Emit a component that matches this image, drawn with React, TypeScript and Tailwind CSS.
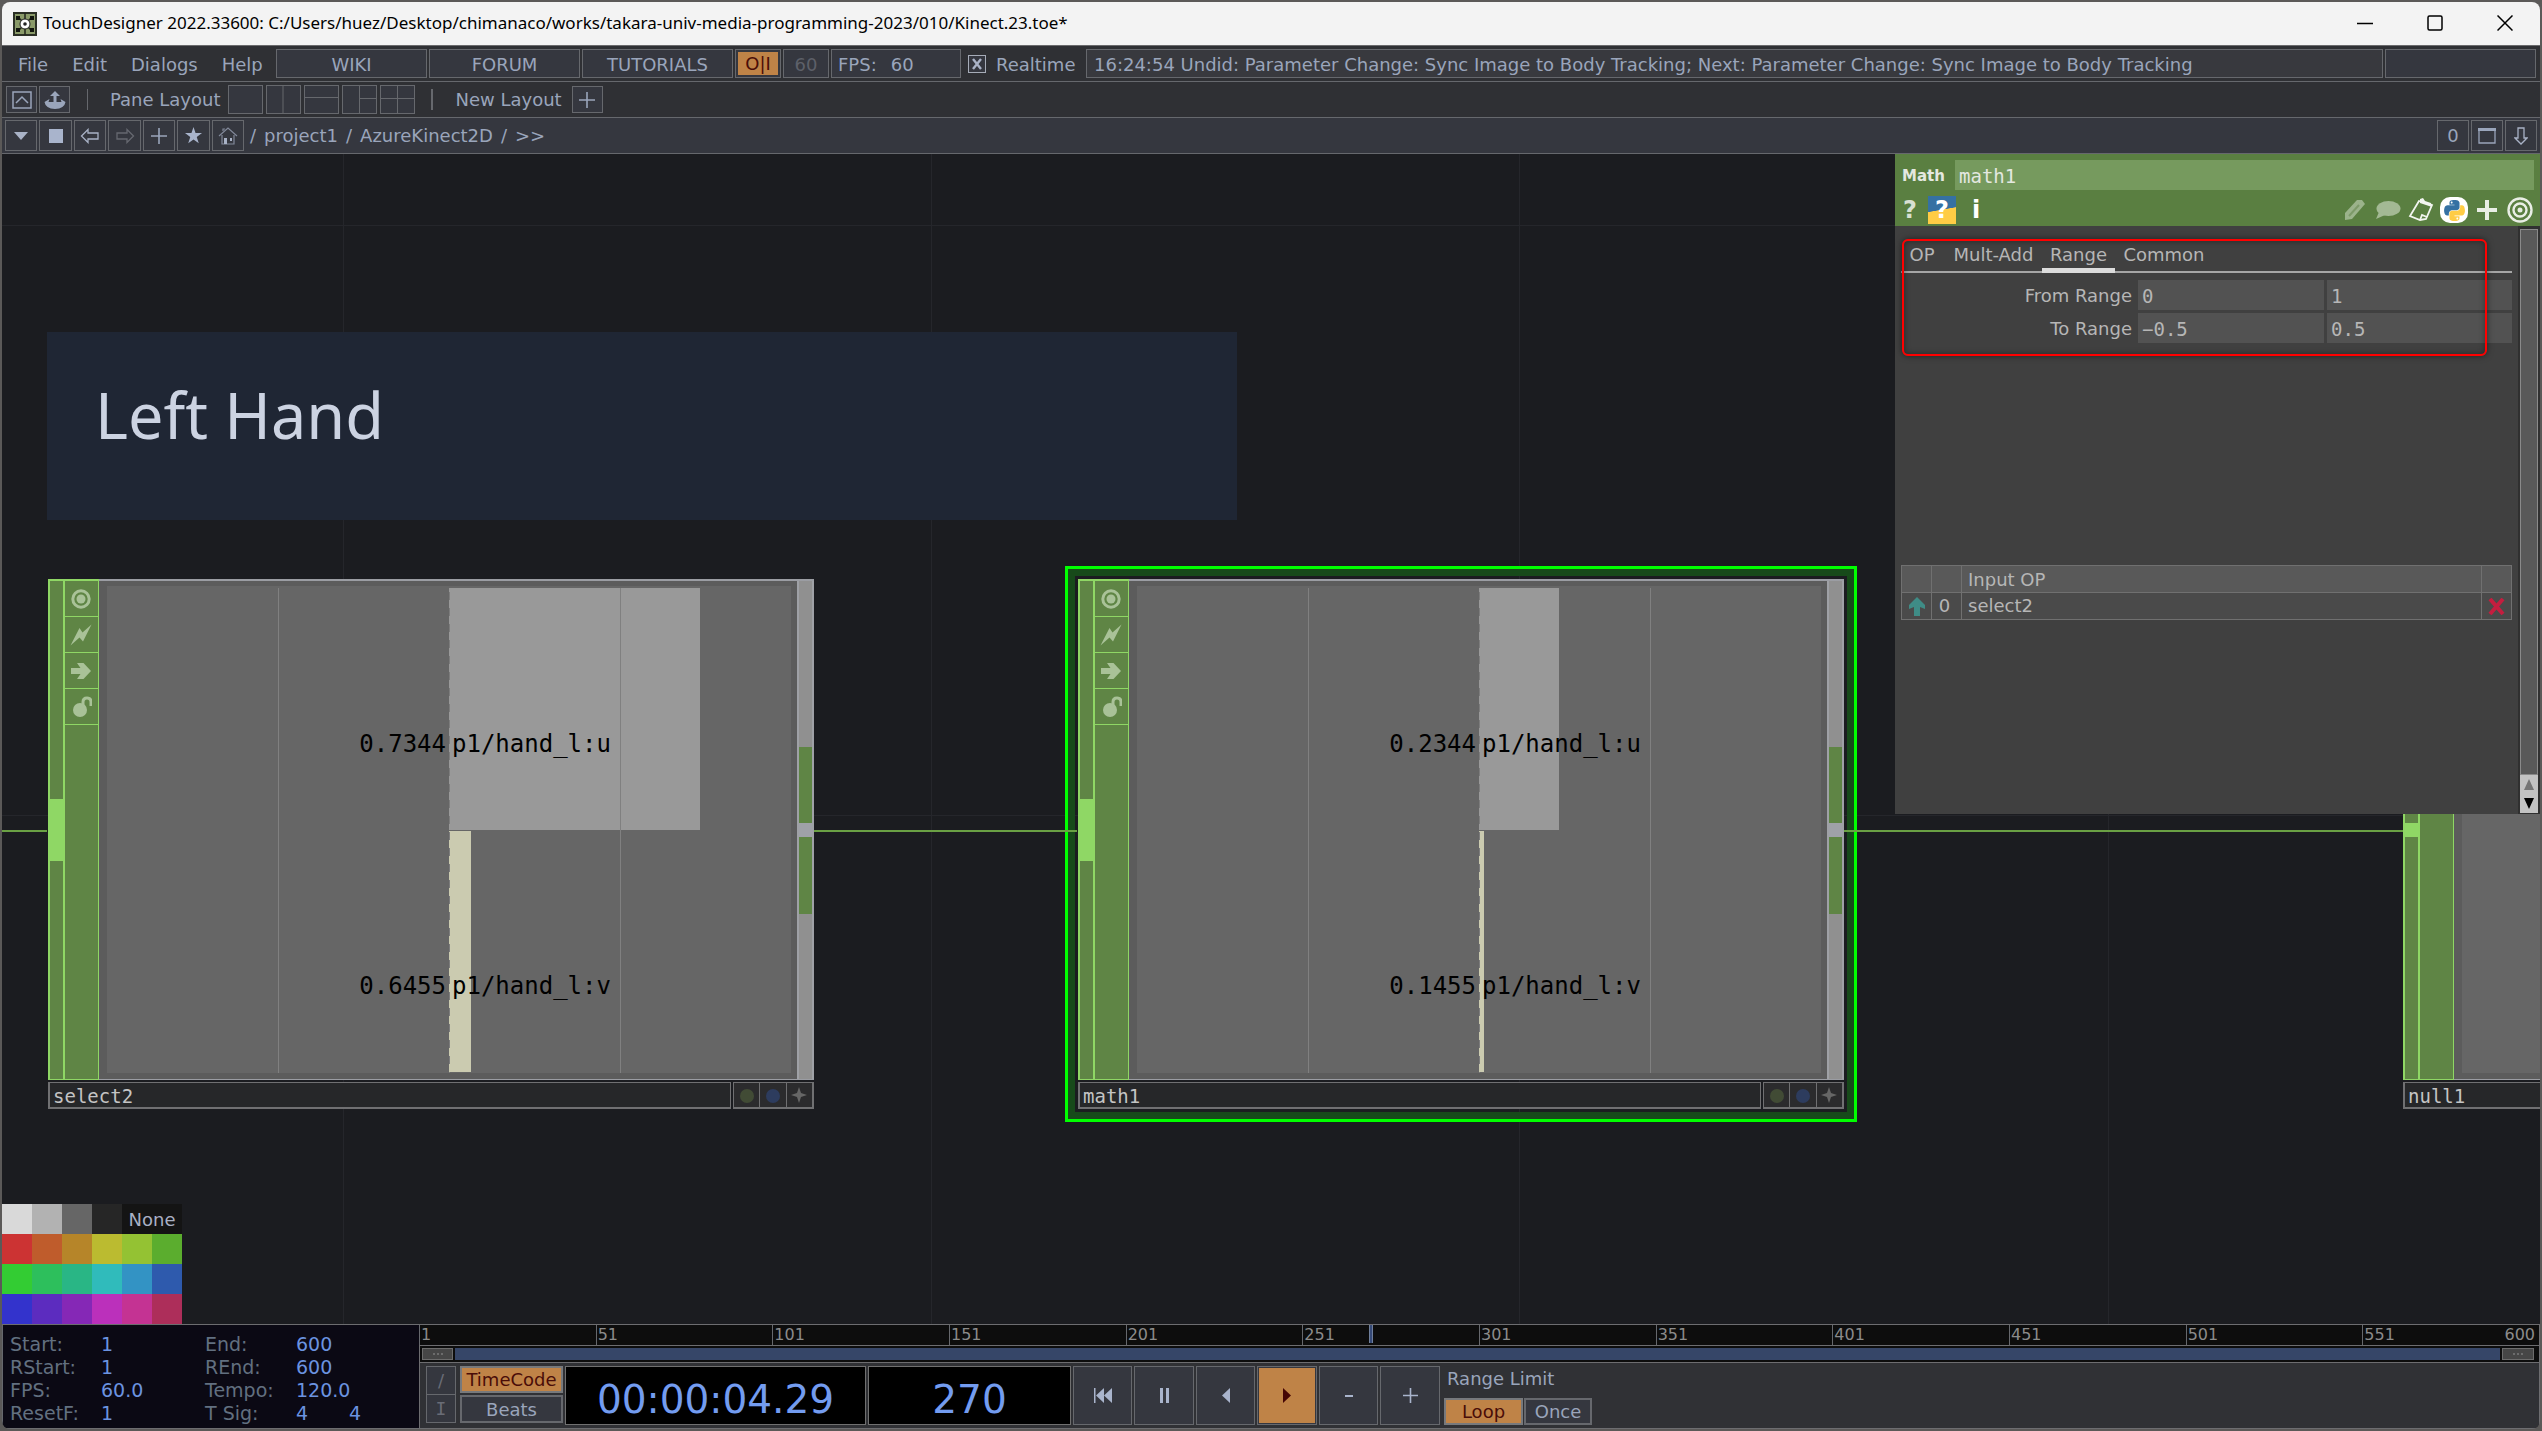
import type { ReactNode } from "react";

const range = (n: number) => Array.from({ length: n }, (_, i) => i);

const PALETTE = [
  "bg-[#cc3333]", "bg-[#bf5c2c]", "bg-[#b68529]", "bg-[#bbbb30]", "bg-[#94c233]", "bg-[#5bad2e]",
  "bg-[#33cc33]", "bg-[#2dbf5c]", "bg-[#29b685]", "bg-[#30bbbb]", "bg-[#3393c4]", "bg-[#2e5aad]",
  "bg-[#3333cc]", "bg-[#5c2cbf]", "bg-[#8528b6]", "bg-[#bb30bb]", "bg-[#c43393]", "bg-[#ad2e5a]",
];

/* ---------- icons ---------- */

const AppIcon = () => (
  <svg width="24" height="24" viewBox="0 0 24 24">
    <rect x="1" y="1" width="22" height="22" fill="#8a9a68" stroke="#2b2f24" strokeWidth="2" />
    <path d="M12 1v22M5 5l14 14M19 5L5 19" stroke="#20241a" strokeWidth="1.5" />
    <path d="M3 4h4v4H3zM17 4h4v4h-4zM3 16h4v4H3zM17 16h4v4h-4z" fill="#11140d" />
    <circle cx="12" cy="12" r="5" fill="#fff" stroke="#222" />
    <circle cx="12" cy="12" r="1.8" fill="#222" />
  </svg>
);

const PythonIcon = ({ size }: { size: number }) => (
  <svg width={size} height={size} viewBox="0 0 111 112">
    <path
      fill="#3571a3"
      d="M54.919 0c-4.584.022-8.961.413-12.813 1.095C30.76 3.099 28.7 7.295 28.7 15.032v10.219h26.813v3.406H18.638c-7.793 0-14.616 4.684-16.75 13.594-2.462 10.213-2.571 16.586 0 27.25 1.905 7.938 6.457 13.594 14.25 13.594h9.219v-12.25c0-8.85 7.657-16.656 16.75-16.656h26.781c7.455 0 13.406-6.138 13.406-13.625v-25.53c0-7.266-6.13-12.725-13.406-13.938C64.282.328 59.502-.02 54.918 0zm-14.5 8.22c2.77 0 5.031 2.298 5.031 5.125 0 2.816-2.262 5.093-5.031 5.093-2.78 0-5.031-2.277-5.031-5.093 0-2.827 2.251-5.125 5.031-5.125z"
    />
    <path
      fill="#ffcc45"
      d="M85.638 28.657v11.906c0 9.231-7.826 17-16.75 17H42.106c-7.336 0-13.406 6.279-13.406 13.625V96.72c0 7.266 6.319 11.54 13.406 13.625 8.488 2.495 16.627 2.946 26.782 0 6.75-1.955 13.406-5.888 13.406-13.625V86.501H55.513v-3.405H95.7c7.793 0 10.696-5.436 13.406-13.594 2.8-8.399 2.68-16.476 0-27.25-1.925-7.758-5.604-13.594-13.406-13.594zM70.575 93.313c2.78 0 5.031 2.278 5.031 5.094 0 2.827-2.251 5.125-5.031 5.125-2.77 0-5.031-2.298-5.031-5.125 0-2.816 2.261-5.094 5.031-5.094z"
    />
  </svg>
);

const PlusIcon = () => (
  <svg width="16" height="16" viewBox="0 0 16 16">
    <path d="M8 0v16M0 8h16" stroke="currentColor" strokeWidth="1.6" />
  </svg>
);

const FLAG_ICONS = [
  // viewer
  <svg key="viewer" width="22" height="22" viewBox="0 0 22 22">
    <circle cx="11" cy="11" r="8.2" fill="none" stroke="#a9c298" strokeWidth="3" />
    <circle cx="11" cy="11" r="4.5" fill="#a9c298" />
  </svg>,
  // cook
  <svg key="cook" width="22" height="22" viewBox="0 0 22 22">
    <path d="M.5 21.5L9.500 4l3 4.500L21.500.5l-8.500 17-3.500-4z" fill="#a9c298" />
  </svg>,
  // bypass
  <svg key="bypass" width="22" height="22" viewBox="0 0 22 22">
    <path d="M1 8h9.500L7 3h6.500L21 11l-7.500 8H7l3.500-5H1z" fill="#a9c298" />
  </svg>,
  // lock
  <svg key="lock" width="22" height="22" viewBox="0 0 22 22">
    <circle cx="10" cy="14" r="7" fill="#a9c298" />
    <path d="M13 9V6q0-4 4-4t4 4v4" fill="none" stroke="#a9c298" strokeWidth="3" />
  </svg>,
];

/* ---------- top bars ---------- */

const BoxButton = ({ className, label, children }: { className: string; label?: string; children?: ReactNode }) => (
  <button aria-label={label} className={`flex shrink-0 items-center justify-center border border-[#66686d] bg-[#35373f] ${className}`}>
    {children}
  </button>
);

const TitleBar = () => (
  <header className="flex h-11 shrink-0 items-center border-b border-[#6a6a6c] bg-[#f3f3f3] pl-[11px] text-black">
    <AppIcon />
    <h1 className="ml-1.5 flex-1 pb-px font-['Noto_Sans',sans-serif] text-[17px] whitespace-nowrap">
      TouchDesigner 2022.33600: C:/Users/huez/Desktop/chimanaco/works/takara-univ-media-programming-2023/010/Kinect.23.toe*
    </h1>
    <div className="flex items-center gap-[54px] pr-[27px] pb-0.5">
      <button aria-label="Minimize">
        <svg width="16" height="16" viewBox="0 0 16 16"><path d="M0 8.500h16" stroke="#000" strokeWidth="1.300" /></svg>
      </button>
      <button aria-label="Maximize">
        <svg width="16" height="16" viewBox="0 0 16 16"><rect x="1" y="1" width="14" height="14" rx="1.500" fill="none" stroke="#000" strokeWidth="1.500" /></svg>
      </button>
      <button aria-label="Close">
        <svg width="16" height="16" viewBox="0 0 16 16"><path d="M.5.5l15 15M15.500.5l-15 15" stroke="#000" strokeWidth="1.500" /></svg>
      </button>
    </div>
  </header>
);

const MenuBar = () => (
  <div className="flex h-9 shrink-0 items-center border-b border-[#66686d] bg-[#2f3034]">
    <nav className="flex w-[274px] shrink-0 gap-6 pt-0.5 pl-4">
      <button>File</button>
      <button>Edit</button>
      <button>Dialogs</button>
      <button>Help</button>
    </nav>
    <div className="flex items-center gap-0.5">
      <BoxButton className="h-[29px] w-[151px] pt-0.5">WIKI</BoxButton>
      <BoxButton className="h-[29px] w-[151px] pt-0.5">FORUM</BoxButton>
      <BoxButton className="h-[29px] w-[151px] pt-0.5">TUTORIALS</BoxButton>
      <BoxButton className="h-[29px] w-[46px] p-0.5">
        <span className="flex h-full w-full items-center justify-center bg-[#bf8347] text-[#4a0d08]">O|I</span>
      </BoxButton>
      <BoxButton className="h-[29px] w-[46px] pt-0.5 text-[#5d6069]">60</BoxButton>
      <div className="flex h-[29px] w-[130px] shrink-0 items-center gap-3.5 border border-[#66686d] bg-[#35373f] pt-0.5 pl-1.5">
        <span>FPS:</span>
        <span>60</span>
      </div>
    </div>
    <div className="flex w-[125px] shrink-0 items-center gap-2.5 pl-[7px]">
      <span className="grid">
        <input id="realtime" type="checkbox" defaultChecked className="col-start-1 row-start-1 size-[18px] appearance-none border border-[#a6acb8] bg-[#35373f]" />
        <svg width="18" height="18" viewBox="0 0 18 18" className="pointer-events-none col-start-1 row-start-1">
          <path d="M5 4l8 10M13 4L5 14" stroke="#a9b2c6" strokeWidth="2.400" />
        </svg>
      </span>
      <label htmlFor="realtime" className="pt-[3px]">Realtime</label>
    </div>
    <div className="mr-0.5 flex h-[29px] min-w-0 flex-1 items-center border border-[#66686d] bg-[#38393e] pt-0.5 pl-[7px] whitespace-nowrap">
      16:24:54 Undid: Parameter Change: Sync Image to Body Tracking; Next: Parameter Change: Sync Image to Body Tracking
    </div>
    <div className="mr-1 h-[29px] w-[151px] shrink-0 border border-[#66686d] bg-[#35373f]" />
  </div>
);

const LAYOUTS = ["", "M17 0v29", "M0 12.500h35", "M17.500 0v29M17 13.500h18", "M17.500 0v29M0 13.500h35"];

const LayoutBar = () => (
  <div className="flex h-9 shrink-0 items-center border-b border-[#66686d] bg-[#2f3034] pl-1">
    <BoxButton label="Palette" className="h-[27px] w-[31px]">
      <svg width="20" height="18" viewBox="0 0 20 18" fill="none" stroke="#9aa5bb" strokeWidth="1.500"><path d="M1 1h18v16H1zM4 12l6-6 6 6" /></svg>
    </BoxButton>
    <BoxButton label="Open" className="ml-0.5 h-[27px] w-[31px]">
      <svg width="22" height="18" viewBox="0 0 22 18" fill="#9aa5bb"><path d="M11 0l5 5h-3.500v6h5l-1-3 5 3q-1 6.500-10.500 7Q1.500 17.500.5 11l5-3-1 3h5V5H6z" /></svg>
    </BoxButton>
    <span className="ml-[17px] h-[21px] w-px bg-[#66686d]" />
    <span className="ml-[22px] pt-px">Pane Layout</span>
    <div className="ml-2 flex gap-[3px]">
      {LAYOUTS.map((d) => (
        <button key={d} aria-label="Pane layout">
          <svg width="35" height="29" viewBox="0 0 35 29" stroke="#66686d"><rect x=".5" y=".5" width="34" height="28" fill="#35373f" /><path d={d} /></svg>
        </button>
      ))}
    </div>
    <span className="ml-4 h-[21px] w-0.5 bg-[#66686d]" />
    <span className="ml-[22px] pt-px">New Layout</span>
    <BoxButton label="Add layout" className="ml-2.5 h-[27px] w-[31px]"><PlusIcon /></BoxButton>
  </div>
);

const PathBar = () => (
  <div className="flex h-9 shrink-0 items-center border-b border-[#66686d] bg-[#35373f] px-[3px]">
    <div className="flex gap-0.5">
      <BoxButton label="Pane type" className="h-[31px] w-8">
        <svg width="14" height="8" viewBox="0 0 14 8"><path d="M0 0h14L7 8z" fill="#a9b2c6" /></svg>
      </BoxButton>
      <BoxButton label="Stop" className="h-[31px] w-[33px]"><span className="size-3.5 bg-[#a9b4cc]" /></BoxButton>
      <BoxButton label="Back" className="h-[31px] w-8">
        <svg width="20" height="16" viewBox="0 0 20 16" fill="none" stroke="#a9b2c6" strokeWidth="1.300"><path d="M1.500 8L8 1.500V5h10v6H8v3.500z" /></svg>
      </BoxButton>
      <BoxButton label="Forward" className="h-[31px] w-[33px]">
        <svg width="20" height="16" viewBox="0 0 20 16" fill="none" stroke="#666870" strokeWidth="1.300"><path d="M18.500 8L12 1.500V5H2v6h10v3.500z" /></svg>
      </BoxButton>
      <BoxButton label="Add" className="h-[31px] w-8"><PlusIcon /></BoxButton>
      <BoxButton label="Bookmarks" className="h-[31px] w-[33px]">
        <svg width="17" height="17" viewBox="0 0 20 20" fill="#a9b4cc"><path d="M10 0l2.400 7.200H20l-6.200 4.600L16.200 19 10 14.600 3.800 19l2.400-7.200L0 7.200h7.600z" /></svg>
      </BoxButton>
      <BoxButton label="Home" className="h-[31px] w-8">
        <svg width="20" height="18" viewBox="0 0 20 18" fill="none" stroke="#82899a" strokeWidth="1.200">
          <path d="M1 9l9-8 9 8M4 8v9h12V8M5 4V2h2" />
          <path d="M6 11h3v6H6zM12 11h2v3h-2z" fill="#a9b2c6" stroke="none" />
        </svg>
      </BoxButton>
    </div>
    <nav className="flex flex-1 gap-2 pt-px pl-1.5">
      <span>/</span>
      <a href="#project1">project1</a>
      <span>/</span>
      <a href="#AzureKinect2D">AzureKinect2D</a>
      <span>/</span>
      <button>&gt;&gt;</button>
    </nav>
    <div className="flex gap-0.5">
      <BoxButton className="h-[31px] w-8 pt-px">0</BoxButton>
      <BoxButton label="Maximize pane" className="h-[31px] w-8">
        <svg width="18" height="16" viewBox="0 0 18 16"><path d="M1 1h16v14H1z" fill="none" stroke="#9aa5bb" strokeWidth="1.300" /><path d="M0 0h18v3H0z" fill="#9aa5bb" /></svg>
      </BoxButton>
      <BoxButton label="Pane link" className="h-[31px] w-8">
        <svg width="14" height="18" viewBox="0 0 14 18" fill="none" stroke="#a9b2c6" strokeWidth="1.300"><path d="M4 1h6v10h3l-6 6-6-6h3z" /></svg>
      </BoxButton>
    </div>
  </div>
);

/* ---------- network ---------- */

type Channel = { name: string; value: string; width: number; color: string };

const SELECT_CHANNELS: Channel[] = [
  { name: "p1/hand_l:u", value: "0.7344", width: 251, color: "bg-[#999999]" },
  { name: "p1/hand_l:v", value: "0.6455", width: 22, color: "bg-[#cbcbb0]" },
];
const MATH_CHANNELS: Channel[] = [
  { name: "p1/hand_l:u", value: "0.2344", width: 80, color: "bg-[#999999]" },
  { name: "p1/hand_l:v", value: "0.1455", width: 5, color: "bg-[#cbcbb0]" },
];

const OpNode = ({ name, channels, smallInput }: { name: string; channels: Channel[]; smallInput?: boolean }) => (
  <div className="w-[766px]">
    <div className="flex h-[501px] border-t-2 border-b border-[#9b9da3]">
      {/* input connector */}
      <div className="-mt-0.5 -mb-px flex w-[17px] flex-col justify-center border-x-2 border-t-2 border-b border-[#8fd765] bg-[#5f8545]">
        <div className={smallInput ? "h-3.5 bg-[#8fd765]" : "h-[62px] bg-[#8fd765]"} />
      </div>
      <div className="-mt-0.5 -mb-px w-[34px] border-t-2 border-r border-b border-[#8fd765] bg-[#5f8545]">
        {FLAG_ICONS.map((icon) => (
          <button key={icon.key} aria-label={`${name} ${icon.key}`} className="flex h-9 w-full items-center justify-center border-b border-[#8fd765] pr-0.5">
            {icon}
          </button>
        ))}
      </div>
      {/* channel bars */}
      <div className="flex-1 bg-[#5c5c5c] pt-[5px] pr-1.5 pb-1.5 pl-2">
        <div className="relative flex h-full flex-col bg-[#666666] pt-0.5 font-['DejaVu_Sans_Mono',monospace] text-[24px] leading-[28px] text-black">
          {channels.map((c) => (
            <div key={c.name} className="relative flex-1 border-b border-[#666666]">
              <div className={`absolute inset-y-0 left-1/2 ${c.color}`} style={{ width: c.width }} />
              <div className="relative grid h-full grid-cols-2 items-center gap-1.5 pt-[70px]">
                <span className="text-right">{c.value}</span>
                <span>{c.name}</span>
              </div>
            </div>
          ))}
          <span className="absolute inset-y-0 left-1/4 mt-0.5 w-px bg-[#808080]" />
          <span className="absolute inset-y-0 left-3/4 mt-0.5 w-px bg-[#808080]" />
          <span className="absolute inset-y-0 left-1/2 mt-0.5 w-px bg-[repeating-linear-gradient(transparent_0_4px,#7c7c7c_4px_12px,transparent_12px_16px)]" />
        </div>
      </div>
      {/* output connector */}
      <div className="flex w-[17px] flex-col justify-center border-x-2 border-[#9fa1a6] bg-[#909090]">
        <div className="h-[76px] bg-[#5f8545]" />
        <div className="h-3.5 bg-[#9fa1a8]" />
        <div className="h-[77px] bg-[#5f8545]" />
      </div>
    </div>
    <div className="mt-0.5 flex h-[27px] gap-0.5">
      <input
        aria-label="Operator name"
        defaultValue={name}
        className="min-w-0 flex-1 border border-b-2 border-l-2 border-[#707072] bg-[#262729] px-[3px] pt-0.5 font-['DejaVu_Sans_Mono',monospace] text-[19px] text-[#c4c4c4]"
      />
      <div className="flex w-[81px] border border-r-2 border-b-2 border-[#707072] bg-[#2b2b2d]">
        <span className="flex flex-1 items-center justify-center pt-0.5"><span className="size-3.5 rounded-full bg-[#414b35]" /></span>
        <span className="flex flex-1 items-center justify-center border-x border-[#707072] pt-0.5"><span className="size-3.5 rounded-full bg-[#2d3c5e]" /></span>
        <span className="flex flex-1 items-center justify-center">
          <svg width="16" height="16" viewBox="0 0 16 16"><path d="M8 0l2 6 6 2-6 2-2 6-2-6-6-2 6-2z" fill="#666" /></svg>
        </span>
      </div>
    </div>
  </div>
);

const Palette = () => (
  <div className="absolute bottom-0 left-0 grid w-[180px] grid-cols-6 text-[#a9b0c4]">
    <button aria-label="White" className="size-[30px] bg-[#d9d9d9]" />
    <button aria-label="Light gray" className="size-[30px] bg-[#b2b2b2]" />
    <button aria-label="Gray" className="size-[30px] bg-[#666666]" />
    <button aria-label="Dark gray" className="size-[30px] bg-[#262626]" />
    <button className="col-span-2 h-[30px] bg-[#141414] pt-0.5">None</button>
    {PALETTE.map((c) => (
      <button key={c} aria-label="Node color" className={`size-[30px] ${c}`} />
    ))}
  </div>
);

const Network = () => (
  <main className="relative min-h-0 flex-1 overflow-hidden bg-[#1b1c20]">
    <svg className="absolute inset-0 h-full w-full" stroke="#25262b">
      <path d="M341.500 0v1170M929.500 0v1170M1517.500 0v1170M2106.500 0v1170M0 71.500h2540M0 661.500h2540" />
    </svg>

    <div className="absolute top-[178px] left-[45px] flex h-[188px] w-[1190px] items-center bg-[#1f2634] pb-[22px] pl-12 font-['Noto_Sans',sans-serif] text-[63px] text-[#ccd3e2]">
      Left Hand
    </div>

    {/* selection frame of the current operator */}
    <div className="absolute top-[412px] left-[1063px] h-[556px] w-[792px] border-[3px] border-[#00ff00]">
      <div className="h-full w-full border-[7px] border-[#174a1a]" />
    </div>

    <svg className="absolute inset-0 h-full w-full" stroke="#6aa044" strokeWidth="2">
      <path d="M0 677h45M812 677h263M1842 677h559" />
    </svg>

    <div className="absolute top-[425px] left-[46px]"><OpNode name="select2" channels={SELECT_CHANNELS} /></div>
    <div className="absolute top-[425px] left-[1076px]"><OpNode name="math1" channels={MATH_CHANNELS} /></div>
    <div className="absolute top-[425px] left-[2401px]"><OpNode name="null1" channels={[]} smallInput /></div>

    <Palette />
    <ParameterPanel />
  </main>
);

/* ---------- parameters ---------- */

const RangeRow = ({ label, from, to }: { label: string; from: string; to: string }) => (
  <div className="flex h-[30px] items-center gap-[3px]">
    <label htmlFor={label} className="w-[231px] shrink-0 pt-0.5 text-right">{label}</label>
    <input id={label} defaultValue={from} className="ml-[3px] h-full w-[186px] shrink-0 bg-[#525252] pt-0.5 pl-1 font-['DejaVu_Sans_Mono',monospace] text-[19px]" />
    <input aria-label={`${label} 2`} defaultValue={to} className="h-full min-w-0 flex-1 bg-[#525252] pt-0.5 pl-1 font-['DejaVu_Sans_Mono',monospace] text-[19px]" />
  </div>
);

const ParameterPanel = () => (
  <aside className="absolute top-0 right-0 flex h-[660px] w-[645px] flex-col bg-[#404040] text-[#b6b6b6]">
    <div className="h-[72px] shrink-0 bg-[#5a7f41] pt-1.5 pr-1.5 pl-[7px] text-[#e4e8e0]">
      <div className="flex h-[30px] items-center">
        <label htmlFor="opname" className="w-[53px] pt-0.5 text-[15px] font-bold">Math</label>
        <input id="opname" defaultValue="math1" className="h-full min-w-0 flex-1 bg-[#769a5e] pt-0.5 pl-1 font-['DejaVu_Sans_Mono',monospace] text-[19px]" />
      </div>
      <div className="flex h-9 items-center justify-between pt-1 text-[24px] font-bold">
        <div className="flex items-center gap-2.5">
          <button className="w-4 text-[#d8e0d2]">?</button>
          <button className="h-7 w-7 bg-[linear-gradient(170deg,#3571a3_48%,#ffcc45_50%)] leading-7 text-white">?</button>
          <button className="w-5 text-white">i</button>
        </div>
        <div className="flex items-center gap-[5px]">
          <button aria-label="Edit" className="flex w-7 justify-center">
            <svg width="22" height="22" viewBox="0 0 22 22" fill="#9bb38b"><path d="M1 21V14L13 1h5l3 4L8 20z" /><path d="M5 17l10-11" stroke="#7d9a69" strokeWidth="2" /></svg>
          </button>
          <button aria-label="Comment" className="flex w-7 justify-center">
            <svg width="26" height="20" viewBox="0 0 26 20" fill="#a3b994"><ellipse cx="13.500" cy="8.500" rx="12" ry="7.500" /><path d="M4 12l-3 7 9-4z" /></svg>
          </button>
          <button aria-label="Copy" className="flex w-7 justify-center">
            <svg width="26" height="24" viewBox="0 0 26 24" fill="none" stroke="#f2f5f0" strokeWidth="1.800"><path d="M11 3L2 18l10 4 6-1 6-14z" /><path d="M12 22l2-5 5 2" /><path d="M12 1l3-1 2 3 6 2 1 4-12-4z" fill="#f2f5f0" stroke="none" /></svg>
          </button>
          <button aria-label="Python" className="flex h-[26px] w-7 items-center justify-center rounded-[10px] bg-white"><PythonIcon size={21} /></button>
          <button aria-label="Add" className="flex w-7 justify-center">
            <svg width="22" height="22" viewBox="0 0 22 22"><path d="M11 1v20M1 11h20" stroke="#e9eee5" strokeWidth="4" /></svg>
          </button>
          <button aria-label="Target" className="flex w-7 justify-center">
            <svg width="26" height="26" viewBox="0 0 26 26" fill="none" stroke="#e9eee5" strokeWidth="2.400"><circle cx="13" cy="13" r="11.500" /><circle cx="13" cy="13" r="6.500" /><circle cx="13" cy="13" r="2.500" fill="#e9eee5" stroke="none" /></svg>
          </button>
        </div>
      </div>
    </div>

    <div className="flex min-h-0 flex-1">
      <div className="relative flex min-w-0 flex-1 flex-col px-1.5">
        <nav className="mt-4 flex h-[31px] border-b-2 border-[#a6a6a6]">
          <button className="w-[42px] pb-1">OP</button>
          <button className="w-[99px] pb-1 pl-0.5">Mult-Add</button>
          <button className="-mb-0.5 w-[73px] border-b-[5px] border-[#dcdcdc]">Range</button>
          <button className="w-[98px] pb-1">Common</button>
        </nav>
        <div className="mt-[7px] flex flex-col gap-[3px]">
          <RangeRow label="From Range" from="0" to="1" />
          <RangeRow label="To Range" from="−0.5" to="0.5" />
        </div>
        {/* highlight around the Range page */}
        <div className="pointer-events-none absolute top-[13px] left-[7px] h-[117px] w-[585px] rounded-md border-2 border-[#ff0000] shadow-[0_0_6px_rgba(0,0,0,0.5),inset_0_0_6px_rgba(0,0,0,0.4)]" />

        <table className="mt-[222px] w-full table-fixed border-collapse text-left text-[18px]">
          <thead>
            <tr className="h-[27px] bg-[#595959]">
              <th className="w-[30px] border border-[#707070]" />
              <th className="w-[30px] border border-[#707070]" />
              <th className="border border-[#707070] pt-0.5 pl-1.5 leading-5 font-normal">Input OP</th>
              <th className="w-[30px] border border-[#707070]" />
            </tr>
          </thead>
          <tbody>
            <tr className="h-[27px] bg-[#4a4a4a]">
              <td className="border border-[#707070]">
                <svg className="mx-auto" width="18" height="19" viewBox="0 0 18 19"><path d="M9 0l8 8v4l-5-2v9H6v-9l-5 2V8z" fill="#3f8c86" /></svg>
              </td>
              <td className="border border-[#707070] pr-1 text-center leading-5">0</td>
              <td className="border border-[#707070] pl-1.5 leading-5">select2</td>
              <td className="border border-[#707070]">
                <svg className="mx-auto" width="17" height="17" viewBox="0 0 17 17"><path d="M2 1l13 15M15 1L2 16" stroke="#c41e3f" strokeWidth="4" /></svg>
              </td>
            </tr>
          </tbody>
        </table>
      </div>
      {/* scroll bar */}
      <div className="flex w-[22px] shrink-0 flex-col bg-[#303030] px-0.5 pt-[3px] pb-px">
        <div className="flex-1 border border-[#8a8a8a] bg-[#595959]" />
        <div className="flex h-[38px] flex-col items-center justify-around bg-[#c2c2c2]">
          <button aria-label="Scroll up"><svg width="10" height="11" viewBox="0 0 10 11"><path d="M5 0l5 11H0z" fill="#757575" /></svg></button>
          <button aria-label="Scroll down"><svg width="10" height="11" viewBox="0 0 10 11"><path d="M0 0h10L5 11z" fill="#000" /></svg></button>
        </div>
      </div>
    </div>
  </aside>
);

/* ---------- timeline ---------- */

const TIME_FIELDS = [
  ["Start:", "1", "End:", "600"],
  ["RStart:", "1", "REnd:", "600"],
  ["FPS:", "60.0", "Tempo:", "120.0"],
  ["ResetF:", "1", "T Sig:", "4"],
];

const FRAME = 270;
const LAST_FRAME = 600;

const TimeSettings = () => (
  <div className="flex w-[418px] shrink-0 flex-col border-x border-[#66686d] bg-[#0b0914] pt-2 pl-[7px] text-[19px] leading-[23px] text-[#627080]">
    {TIME_FIELDS.map(([a, av, b, bv]) => (
      <div key={a} className="flex h-[23px]">
        <label htmlFor={a} className="w-[91px]">{a}</label>
        <input id={a} defaultValue={av} className="w-[104px] text-[#6b93e0]" />
        <label htmlFor={b} className="w-[91px]">{b}</label>
        <input id={b} defaultValue={bv} className={b === "T Sig:" ? "w-[53px] text-[#6b93e0]" : "w-[80px] text-[#6b93e0]"} />
        {b === "T Sig:" && <input aria-label="Beat unit" defaultValue="4" className="w-[40px] text-[#6b93e0]" />}
      </div>
    ))}
  </div>
);

const Transport = () => (
  <div className="flex flex-1 items-start gap-0.5 bg-[#303135] pt-[3px] pl-1.5">
    <div className="mr-0.5 flex w-[30px] flex-col border border-[#66686d] bg-[#35373f] text-[#696c76]">
      <button className="h-7 border-b border-[#66686d]">/</button>
      <button className="h-[27px] font-['DejaVu_Sans_Mono',monospace]">I</button>
    </div>
    <div className="flex w-[103px] flex-col gap-0.5">
      <button className="h-[27px] border-2 border-[#77797c] bg-[#bf8347] text-[#4a0d08]">TimeCode</button>
      <button className="h-7 border-2 border-[#66686d] bg-[#35373f] pt-px">Beats</button>
    </div>
    <div className="flex h-[59px] w-[301px] items-center justify-center border border-[#707070] bg-black pt-2 text-[39px] text-[#739cf0]">00:00:04.29</div>
    <div className="flex h-[59px] w-[203px] items-center justify-center border border-[#707070] bg-black pt-2 text-[39px] text-[#739cf0]">270</div>
    <div className="flex gap-0.5 text-[#a9b4cc]">
      <BoxButton label="Reset" className="h-[59px] w-[59px]">
        <svg width="18" height="15" viewBox="0 0 18 15" fill="currentColor"><path d="M0 0h1.500v15H0zM10 0v15L2 7.500zM18 0v15l-8-7.500z" /></svg>
      </BoxButton>
      <BoxButton label="Pause" className="h-[59px] w-[60px]">
        <svg width="9" height="15" viewBox="0 0 9 15" fill="currentColor"><path d="M0 0h3v15H0zM6 0h3v15H6z" /></svg>
      </BoxButton>
      <BoxButton label="Play backward" className="h-[59px] w-[59px]">
        <svg width="8" height="15" viewBox="0 0 8 15" fill="currentColor"><path d="M8 0v15L0 7.500z" /></svg>
      </BoxButton>
      <BoxButton label="Play" className="h-[59px] w-[60px] p-px">
        <span className="flex h-full w-full items-center justify-center bg-[#bf8347]">
          <svg width="8" height="15" viewBox="0 0 8 15"><path d="M0 0v15l8-7.500z" fill="#450505" /></svg>
        </span>
      </BoxButton>
      <BoxButton label="Step back" className="h-[59px] w-[59px]">
        <span className="h-0.5 w-2 bg-[#a9b4cc]" />
      </BoxButton>
      <BoxButton label="Step forward" className="h-[59px] w-[60px]">
        <svg width="15" height="15" viewBox="0 0 15 15"><path d="M7.500 0v15M0 7.500h15" stroke="currentColor" strokeWidth="1.600" /></svg>
      </BoxButton>
    </div>
    <div className="ml-0.5 flex flex-col">
      <span className="h-8 pt-0.5 pl-[3px]">Range Limit</span>
      <div className="flex gap-px">
        <button className="h-[27px] w-[79px] border-2 border-[#77797c] bg-[#bf8347] leading-6 text-[#4a0d08]">Loop</button>
        <button className="h-[27px] w-[68px] border-2 border-[#66686d] bg-[#35373f] leading-6">Once</button>
      </div>
    </div>
  </div>
);

const Timeline = () => (
  <footer className="flex h-[105px] shrink-0 border-y border-[#6d6d70]">
    <TimeSettings />
    <div className="-ml-px flex min-w-0 flex-1 flex-col border-x border-[#6d6d70]">
      <div className="relative -ml-px grid h-[21px] grid-cols-12 border-b border-[#6d6d70] bg-[#0d0d0d] text-[16px] leading-[19px] text-[#8b8b8b]">
        {range(12).map((i) => (
          <div key={i} className="flex justify-between border-l border-[#66686d] pr-1 pl-px">
            <span>{i * 50 + 1}</span>
            {i === 11 && <span>{LAST_FRAME}</span>}
          </div>
        ))}
        <span
          className="absolute top-0 h-[18px] w-1 border-x border-[#6f7f9c] bg-[#364a78]"
          style={{ left: `${((FRAME - 1) / LAST_FRAME) * 100}%` }}
        />
      </div>
      <div className="flex h-[17px] items-center gap-0.5 border-b border-[#6d6d70] bg-[#0d0d0d] pr-[5px] pl-0.5">
        <button aria-label="Range start" className="flex h-3 w-[31px] items-center justify-center gap-0.5 border border-[#6c6c6c] bg-[#464646]">
          {range(3).map((i) => <span key={i} className="size-0.5 bg-[#6c6c6c]" />)}
        </button>
        <div className="h-3 flex-1 bg-[#364668]" />
        <button aria-label="Range end" className="flex h-3 w-[32px] items-center justify-center gap-0.5 border border-[#6c6c6c] bg-[#464646]">
          {range(3).map((i) => <span key={i} className="size-0.5 bg-[#6c6c6c]" />)}
        </button>
      </div>
      <Transport />
    </div>
  </footer>
);

export default function App() {
  return (
    <div className="h-screen bg-[#5b5958] p-0.5 font-['DejaVu_Sans',sans-serif] text-[18px] leading-[22px] text-[#9aa5bb]">
      <div className="flex h-full flex-col overflow-hidden rounded-lg">
        <TitleBar />
        <MenuBar />
        <LayoutBar />
        <PathBar />
        <Network />
        <Timeline />
      </div>
    </div>
  );
}
